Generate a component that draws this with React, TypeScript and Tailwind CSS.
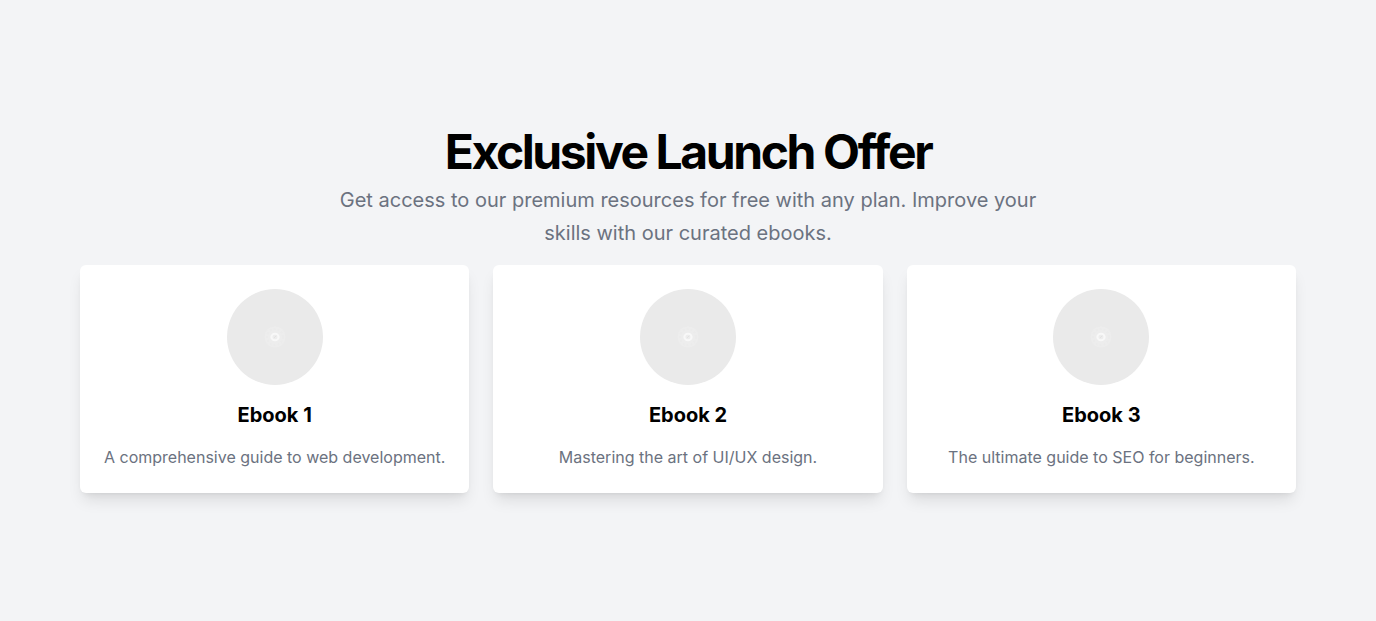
const ebooks = [
  { title: "Ebook 1", description: "A comprehensive guide to web development." },
  { title: "Ebook 2", description: "Mastering the art of UI/UX design." },
  { title: "Ebook 3", description: "The ultimate guide to SEO for beginners." },
];

function Cover({ label }: { label: string }) {
  return (
    <svg viewBox="0 0 96 96" className="size-24 rounded-full bg-[#eaeaea]" role="img" aria-label={label}>
      <circle cx="48" cy="48" r="10.5" fill="#ededed" />
      <circle cx="48" cy="48" r="8" fill="none" stroke="#ebebeb" strokeWidth="2" strokeDasharray="2 2" />
      <ellipse cx="48" cy="48" rx="3.6" ry="3.2" fill="#ededed" stroke="#f8f8f8" strokeWidth="2" />
      <path d="M47 48.8 49.2 47" stroke="#e2e2e2" strokeWidth="1" />
    </svg>
  );
}

export default function App() {
  return (
    <section className="w-full bg-[#f3f4f6] py-32 font-[Inter,sans-serif] text-black">
      <div className="flex flex-col items-center gap-4 px-6 text-center">
        <div className="flex flex-col gap-2">
          <h1 className="text-5xl leading-none font-bold tracking-tighter">Exclusive Launch Offer</h1>
          <p className="mx-auto max-w-[700px] text-xl leading-relaxed text-[#6b7280]">
            Get access to our premium resources for free with any plan. Improve your skills with our curated ebooks.
          </p>
        </div>
        <div className="grid gap-6 md:grid-cols-3">
          {ebooks.map((ebook) => (
            <article key={ebook.title} className="flex flex-col items-center gap-4 rounded-md bg-white p-6 shadow-lg">
              <Cover label={`${ebook.title} cover`} />
              <h2 className="text-xl font-bold">{ebook.title}</h2>
              <p className="text-base text-[#6b7280]">{ebook.description}</p>
            </article>
          ))}
        </div>
      </div>
    </section>
  );
}
